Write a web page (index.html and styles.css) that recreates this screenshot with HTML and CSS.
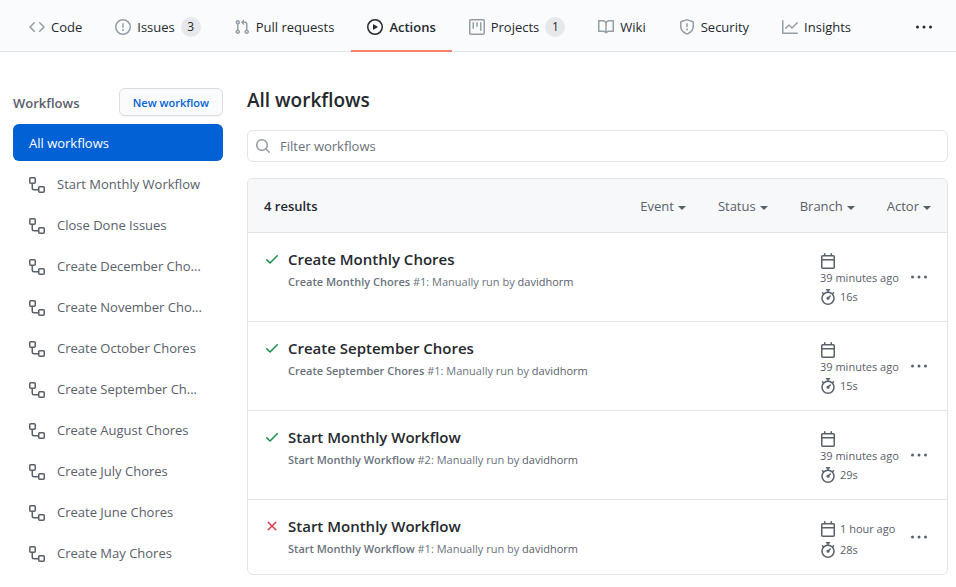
FILE: index.html
```html
<!DOCTYPE html>
<html lang="en">
<head>
<meta charset="utf-8">
<title>Actions</title>
<link rel="stylesheet" href="styles.css">
</head>
<body>
<svg class="sprite" aria-hidden="true">
  <symbol id="code" viewBox="0 0 16 16"><path fill-rule="evenodd" d="M4.72 3.22a.75.75 0 011.06 1.06L2.06 8l3.72 3.72a.75.75 0 11-1.06 1.06L.47 8.53a.75.75 0 010-1.06l4.25-4.25zm6.56 0a.75.75 0 10-1.06 1.06L13.94 8l-3.72 3.72a.75.75 0 101.06 1.06l4.25-4.25a.75.75 0 000-1.06l-4.25-4.25z"/></symbol>
  <symbol id="issue" viewBox="0 0 16 16"><path fill-rule="evenodd" d="M8 1.5a6.5 6.5 0 100 13 6.5 6.5 0 000-13zM0 8a8 8 0 1116 0A8 8 0 010 8zm9 3a1 1 0 11-2 0 1 1 0 012 0zm-.25-6.25a.75.75 0 00-1.5 0v3.5a.75.75 0 001.5 0v-3.5z"/></symbol>
  <symbol id="pull" viewBox="0 0 16 16"><path fill-rule="evenodd" d="M7.177 3.073L9.573.677A.25.25 0 0110 .854v4.792a.25.25 0 01-.427.177L7.177 3.427a.25.25 0 010-.354zM3.75 2.5a.75.75 0 100 1.5.75.75 0 000-1.5zm-2.25.75a2.25 2.25 0 113 2.122v5.256a2.251 2.251 0 11-1.5 0V5.372A2.25 2.25 0 011.5 3.25zM11 2.5h-1V4h1a1 1 0 011 1v5.628a2.251 2.251 0 101.5 0V5A2.5 2.5 0 0011 2.5zm1 10.25a.75.75 0 111.5 0 .75.75 0 01-1.5 0zM3.75 12a.75.75 0 100 1.5.75.75 0 000-1.5z"/></symbol>
  <symbol id="play" viewBox="0 0 16 16"><path fill-rule="evenodd" d="M1.5 8a6.5 6.5 0 1113 0 6.5 6.5 0 01-13 0zM8 0a8 8 0 100 16A8 8 0 008 0zM6.379 5.227A.25.25 0 006 5.442v5.117a.25.25 0 00.379.214l4.264-2.559a.25.25 0 000-.428L6.379 5.227z"/></symbol>
  <symbol id="project" viewBox="0 0 16 16"><path fill-rule="evenodd" d="M1.75 0A1.75 1.75 0 000 1.75v12.5C0 15.216.784 16 1.75 16h12.5A1.75 1.75 0 0016 14.25V1.75A1.75 1.75 0 0014.25 0H1.75zM1.5 1.75a.25.25 0 01.25-.25h12.5a.25.25 0 01.25.25v12.5a.25.25 0 01-.25.25H1.75a.25.25 0 01-.25-.25V1.75zM11.75 3a.75.75 0 00-.75.75v7.5a.75.75 0 001.5 0v-7.5a.75.75 0 00-.75-.75zm-8.25.75a.75.75 0 011.5 0v5.5a.75.75 0 01-1.5 0v-5.5zM8 3a.75.75 0 00-.75.75v3.5a.75.75 0 001.5 0v-3.5A.75.75 0 008 3z"/></symbol>
  <symbol id="book" viewBox="0 0 16 16"><path fill-rule="evenodd" d="M0 1.75A.75.75 0 01.75 1h4.253c1.227 0 2.317.59 3 1.501A3.744 3.744 0 0111.006 1h4.245a.75.75 0 01.75.75v10.5a.75.75 0 01-.75.75h-4.507a2.25 2.25 0 00-1.591.659l-.622.621a.75.75 0 01-1.06 0l-.622-.621A2.25 2.25 0 005.258 13H.75a.75.75 0 01-.75-.75V1.75zm8.755 3a2.25 2.25 0 012.25-2.25H14.5v9h-3.757c-.71 0-1.4.201-1.992.572l.004-7.322zm-1.504 7.324l.004-5.073-.002-2.253A2.25 2.25 0 005.003 2.5H1.5v9h3.757a3.75 3.75 0 011.994.574z"/></symbol>
  <symbol id="shield" viewBox="0 0 16 16"><path fill-rule="evenodd" d="M7.467.133a1.75 1.75 0 011.066 0l5.25 1.68A1.75 1.75 0 0115 3.48V7c0 1.566-.32 3.182-1.303 4.682-.983 1.498-2.585 2.813-5.032 3.855a1.7 1.7 0 01-1.33 0c-2.447-1.042-4.049-2.357-5.032-3.855C1.32 10.182 1 8.566 1 7V3.48a1.75 1.75 0 011.217-1.667l5.25-1.68zm.61 1.429a.25.25 0 00-.153 0l-5.25 1.68a.25.25 0 00-.174.238V7c0 1.358.275 2.666 1.057 3.86.784 1.194 2.121 2.34 4.366 3.297a.2.2 0 00.154 0c2.245-.956 3.582-2.104 4.366-3.298C13.225 9.666 13.5 8.36 13.5 7V3.48a.25.25 0 00-.174-.237l-5.25-1.68zM9 10.5a1 1 0 11-2 0 1 1 0 012 0zm-.25-5.75a.75.75 0 10-1.5 0v3a.75.75 0 001.5 0v-3z"/></symbol>
  <symbol id="graph" viewBox="0 0 16 16"><path fill-rule="evenodd" d="M1.5 1.75a.75.75 0 00-1.5 0v12.5c0 .414.336.75.75.75h14.5a.75.75 0 000-1.5H1.5V1.75zm14.28 2.53a.75.75 0 00-1.06-1.06L10 7.94 7.53 5.47a.75.75 0 00-1.06 0L3.22 8.72a.75.75 0 001.06 1.06L7 7.06l2.47 2.47a.75.75 0 001.06 0l5.25-5.25z"/></symbol>
  <symbol id="dots" viewBox="0 0 16 16"><circle cx="1.5" cy="8" r="1.5"/><circle cx="8" cy="8" r="1.5"/><circle cx="14.5" cy="8" r="1.5"/></symbol>
  <symbol id="workflow" viewBox="0 0 16 16"><path fill-rule="evenodd" d="M0 1.75C0 .784.784 0 1.75 0h3.5C6.216 0 7 .784 7 1.75v3.5A1.75 1.75 0 015.25 7H4v4a1 1 0 001 1h4v-1.25C9 9.784 9.784 9 10.75 9h3.5c.966 0 1.75.784 1.75 1.75v3.5A1.75 1.75 0 0114.25 16h-3.5A1.75 1.75 0 019 14.25v-.75H5A2.5 2.5 0 012.5 11V7h-.75A1.75 1.75 0 010 5.25v-3.5zm1.75-.25a.25.25 0 00-.25.25v3.5c0 .138.112.25.25.25h3.5a.25.25 0 00.25-.25v-3.5a.25.25 0 00-.25-.25h-3.5zm9 9a.25.25 0 00-.25.25v3.5c0 .138.112.25.25.25h3.5a.25.25 0 00.25-.25v-3.5a.25.25 0 00-.25-.25h-3.5z"/></symbol>
  <symbol id="search" viewBox="0 0 16 16"><path fill-rule="evenodd" d="M11.5 7a4.499 4.499 0 11-8.998 0A4.499 4.499 0 0111.5 7zm-.82 4.74a6 6 0 111.06-1.06l3.04 3.04a.75.75 0 11-1.06 1.06l-3.04-3.04z"/></symbol>
  <symbol id="check" viewBox="0 0 16 16"><path fill-rule="evenodd" d="M13.78 4.22a.75.75 0 010 1.06l-7.25 7.25a.75.75 0 01-1.06 0L2.22 9.28a.75.75 0 011.06-1.06L6 10.94l6.72-6.72a.75.75 0 011.06 0z"/></symbol>
  <symbol id="cross" viewBox="0 0 16 16"><path fill-rule="evenodd" d="M3.72 3.72a.75.75 0 011.06 0L8 6.94l3.22-3.22a.75.75 0 111.06 1.06L9.06 8l3.22 3.22a.75.75 0 11-1.06 1.06L8 9.06l-3.22 3.22a.75.75 0 01-1.06-1.06L6.94 8 3.72 4.78a.75.75 0 010-1.06z"/></symbol>
  <symbol id="calendar" viewBox="0 0 16 16"><path fill-rule="evenodd" d="M4.75 0a.75.75 0 01.75.75V2h5V.75a.75.75 0 011.5 0V2h1.25c.966 0 1.75.784 1.75 1.75v10.5A1.75 1.75 0 0113.25 16H2.75A1.75 1.75 0 011 14.25V3.75C1 2.784 1.784 2 2.75 2H4V.75A.75.75 0 014.75 0zm0 3.5h8.5a.25.25 0 01.25.25V6h-11V3.75a.25.25 0 01.25-.25h2zm-2.25 4v6.75c0 .138.112.25.25.25h10.5a.25.25 0 00.25-.25V7.5h-11z"/></symbol>
  <symbol id="stopwatch" viewBox="0 0 16 16"><path fill-rule="evenodd" d="M5.75.75A.75.75 0 016.5 0h3a.75.75 0 010 1.5h-.75v1l-.001.041a6.718 6.718 0 013.464 1.435l.007-.006.75-.75a.75.75 0 111.06 1.06l-.75.75-.006.007a6.75 6.75 0 11-10.548 0L2.72 5.03l-.75-.75a.75.75 0 011.06-1.06l.75.75.007.006A6.718 6.718 0 017.25 2.541a.756.756 0 010-.041v-1H6.5a.75.75 0 01-.75-.75zM8 14.5A5.25 5.25 0 108 4a5.25 5.25 0 000 10.5zm.389-6.7l1.33-1.33a.75.75 0 111.061 1.06L9.45 8.861A1.502 1.502 0 018 10.75a1.5 1.5 0 11.389-2.95z"/></symbol>
</svg>

<nav class="tabs" aria-label="Repository">
  <a class="tab" href="#"><svg class="icon"><use href="#code"/></svg>Code</a>
  <a class="tab" href="#"><svg class="icon"><use href="#issue"/></svg>Issues<span class="count">3</span></a>
  <a class="tab" href="#"><svg class="icon"><use href="#pull"/></svg>Pull requests</a>
  <a class="tab selected" href="#" aria-current="page"><svg class="icon"><use href="#play"/></svg>Actions</a>
  <a class="tab" href="#"><svg class="icon"><use href="#project"/></svg>Projects<span class="count">1</span></a>
  <a class="tab" href="#"><svg class="icon"><use href="#book"/></svg>Wiki</a>
  <a class="tab" href="#"><svg class="icon"><use href="#shield"/></svg>Security</a>
  <a class="tab" href="#"><svg class="icon"><use href="#graph"/></svg>Insights</a>
  <button class="more" type="button" aria-label="More"><svg class="icon"><use href="#dots"/></svg></button>
</nav>

<div class="layout">
  <aside class="sidebar">
    <div class="sidebar-head">
      <h2>Workflows</h2>
      <button class="new" type="button">New workflow</button>
    </div>
    <nav class="flows" aria-label="Workflows">
      <a class="flow current" href="#"><span>All workflows</span></a>
      <a class="flow" href="#"><svg class="icon"><use href="#workflow"/></svg><span>Start Monthly Workflow</span></a>
      <a class="flow" href="#"><svg class="icon"><use href="#workflow"/></svg><span>Close Done Issues</span></a>
      <a class="flow" href="#"><svg class="icon"><use href="#workflow"/></svg><span>Create December Cho...</span></a>
      <a class="flow" href="#"><svg class="icon"><use href="#workflow"/></svg><span>Create November Cho...</span></a>
      <a class="flow" href="#"><svg class="icon"><use href="#workflow"/></svg><span>Create October Chores</span></a>
      <a class="flow" href="#"><svg class="icon"><use href="#workflow"/></svg><span>Create September Ch...</span></a>
      <a class="flow" href="#"><svg class="icon"><use href="#workflow"/></svg><span>Create August Chores</span></a>
      <a class="flow" href="#"><svg class="icon"><use href="#workflow"/></svg><span>Create July Chores</span></a>
      <a class="flow" href="#"><svg class="icon"><use href="#workflow"/></svg><span>Create June Chores</span></a>
      <a class="flow" href="#"><svg class="icon"><use href="#workflow"/></svg><span>Create May Chores</span></a>
    </nav>
  </aside>

  <main>
    <h1>All workflows</h1>
    <label class="filter">
      <svg class="icon"><use href="#search"/></svg>
      <input type="search" placeholder="Filter workflows" aria-label="Filter workflows">
    </label>

    <section class="runs">
      <header class="runs-head">
        <strong>4 results</strong>
        <div class="menus">
          <button class="menu" type="button">Event</button>
          <button class="menu" type="button">Status</button>
          <button class="menu" type="button">Branch</button>
          <button class="menu" type="button">Actor</button>
        </div>
      </header>

      <article class="run">
        <svg class="icon ok"><use href="#check"/></svg>
        <div class="info">
          <a class="title" href="#">Create Monthly Chores</a>
          <p><b>Create Monthly Chores</b> #1: Manually run by <a href="#">davidhorm</a></p>
        </div>
        <div class="meta">
          <div class="when stacked"><svg class="icon"><use href="#calendar"/></svg><span>39 minutes ago</span></div>
          <div class="when"><svg class="icon"><use href="#stopwatch"/></svg><span>16s</span></div>
        </div>
        <button class="more" type="button" aria-label="Run options"><svg class="icon"><use href="#dots"/></svg></button>
      </article>

      <article class="run">
        <svg class="icon ok"><use href="#check"/></svg>
        <div class="info">
          <a class="title" href="#">Create September Chores</a>
          <p><b>Create September Chores</b> #1: Manually run by <a href="#">davidhorm</a></p>
        </div>
        <div class="meta">
          <div class="when stacked"><svg class="icon"><use href="#calendar"/></svg><span>39 minutes ago</span></div>
          <div class="when"><svg class="icon"><use href="#stopwatch"/></svg><span>15s</span></div>
        </div>
        <button class="more" type="button" aria-label="Run options"><svg class="icon"><use href="#dots"/></svg></button>
      </article>

      <article class="run">
        <svg class="icon ok"><use href="#check"/></svg>
        <div class="info">
          <a class="title" href="#">Start Monthly Workflow</a>
          <p><b>Start Monthly Workflow</b> #2: Manually run by <a href="#">davidhorm</a></p>
        </div>
        <div class="meta">
          <div class="when stacked"><svg class="icon"><use href="#calendar"/></svg><span>39 minutes ago</span></div>
          <div class="when"><svg class="icon"><use href="#stopwatch"/></svg><span>29s</span></div>
        </div>
        <button class="more" type="button" aria-label="Run options"><svg class="icon"><use href="#dots"/></svg></button>
      </article>

      <article class="run">
        <svg class="icon fail"><use href="#cross"/></svg>
        <div class="info">
          <a class="title" href="#">Start Monthly Workflow</a>
          <p><b>Start Monthly Workflow</b> #1: Manually run by <a href="#">davidhorm</a></p>
        </div>
        <div class="meta">
          <div class="when"><svg class="icon"><use href="#calendar"/></svg><span>1 hour ago</span></div>
          <div class="when"><svg class="icon"><use href="#stopwatch"/></svg><span>28s</span></div>
        </div>
        <button class="more" type="button" aria-label="Run options"><svg class="icon"><use href="#dots"/></svg></button>
      </article>
    </section>
  </main>
</div>
</body>
</html>
```
FILE: styles.css
```css
* { box-sizing: border-box; }

body {
  margin: 0;
  background: #fff;
  color: #24292e;
  font: 13px/20px "Open Sans", "Noto Sans", sans-serif;
}

a { color: inherit; text-decoration: none; }
h1, h2, p { margin: 0; }
button, input { font: inherit; color: inherit; }
button { padding: 0; border: 0; background: none; cursor: pointer; }

.sprite { display: none; }
.icon { width: 16px; height: 16px; flex: none; fill: currentColor; }

/* Repository tabs */
.tabs {
  display: flex;
  gap: 1px;
  padding: 0 24px 0 13px;
  background: #fafbfc;
  box-shadow: inset 0 -1px #e1e4e8;
}
.tab {
  display: flex;
  align-items: center;
  gap: 6px;
  padding: 17px 16px 13px;
  border-bottom: 2px solid transparent;
  white-space: nowrap;
}
.tab .icon { color: #959da5; }
.tab.selected { border-color: #f9826c; font-weight: 600; }
.tab.selected .icon { color: inherit; }
.count {
  min-width: 20px;
  border-radius: 10px;
  background: #e6e8eb;
  font-size: 12px;
  font-weight: 500;
  text-align: center;
}
.more { display: flex; align-items: center; }
.tabs .more { margin-left: auto; padding-top: 2px; }

/* Page columns */
.layout {
  display: grid;
  grid-template-columns: 210px minmax(0, 1fr);
  gap: 24px;
  padding: 36px 8px 12px 13px;
}

.sidebar-head {
  display: flex;
  align-items: center;
  justify-content: space-between;
  margin-bottom: 8px;
}
.sidebar-head h2 {
  padding-top: 2px;
  color: #586069;
  font-size: 13px;
  font-weight: 600;
}
.new {
  height: 28px;
  padding: 1px 13px 0;
  border: 1px solid #d9dce0;
  border-radius: 6px;
  background: #fafbfc;
  box-shadow: 0 1px 0 rgba(27, 31, 35, 0.04);
  color: #0361d6;
  font-size: 11px;
  font-weight: 600;
}

.flows { display: flex; flex-direction: column; gap: 4px; }
.flow {
  display: flex;
  align-items: center;
  gap: 12px;
  height: 37px;
  padding: 0 16px;
  border-radius: 6px;
  color: #586069;
  white-space: nowrap;
}
.flow .icon { margin-top: 2px; }
.flow.current { background: #0361d6; color: #fff; font-weight: 500; }

/* Run list */
h1 { font-size: 19px; line-height: 24px; font-weight: 600; }
.filter {
  display: flex;
  align-items: center;
  gap: 9px;
  height: 32px;
  margin: 18px 0 16px;
  padding: 0 7px;
  border: 1px solid #e1e4e8;
  border-radius: 6px;
  color: #959da5;
}
.filter input {
  flex: 1;
  min-width: 0;
  padding: 0;
  border: 0;
  outline: 0;
  background: none;
  color: #24292e;
}
.filter input::placeholder { color: #6a737d; opacity: 1; }

.runs { border: 1px solid #e1e4e8; border-radius: 6px; }
.runs-head {
  display: flex;
  align-items: center;
  justify-content: space-between;
  padding: 17px 16px 16px;
  border-radius: 6px 6px 0 0;
  background: #f6f8fa;
}
.runs-head strong { font-weight: 600; }
.menus { display: flex; gap: 32px; color: #586069; }
.menu { display: flex; align-items: center; gap: 4px; }
.menu::after {
  content: "";
  margin-top: 4px;
  border: 4px solid transparent;
  border-top-color: currentColor;
  border-bottom: 0;
}

.run {
  display: flex;
  padding: 16px 20px 16px 16px;
  border-top: 1px solid #e1e4e8;
  color: #586069;
}
.run > .icon { margin-top: 2px; }
.ok { color: #178c4a; }
.fail { color: #d73a49; }
.info { flex: 1; min-width: 0; margin-left: 8px; font-size: 11px; }
.title {
  display: block;
  color: #24292e;
  font-size: 15px;
  line-height: 20px;
  font-weight: 600;
}
.info p { margin-top: 4px; color: #6a737d; line-height: 18px; }
.info b { font-weight: 600; }
.info p a { color: #586069; }
.meta { width: 91px; margin: 2px 0 -2px; font-size: 11px; }
.when { display: flex; align-items: center; gap: 4px; height: 21px; white-space: nowrap; }
.when.stacked {
  flex-direction: column;
  align-items: flex-start;
  gap: 0;
  height: auto;
  padding-top: 2px;
  line-height: 17px;
}
```
